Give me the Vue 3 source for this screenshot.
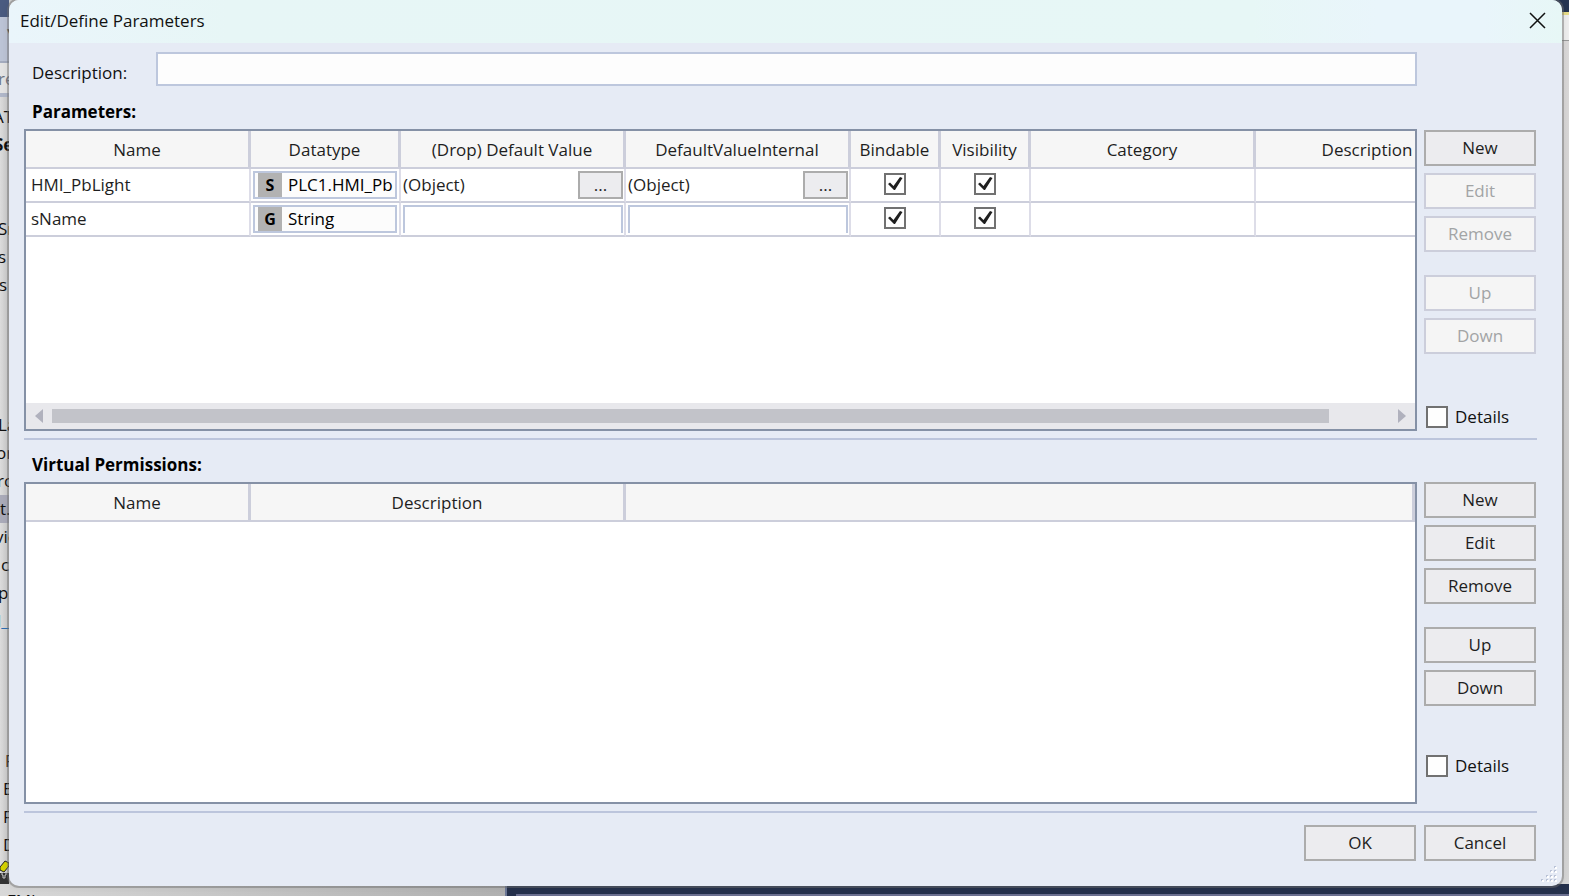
<script setup>
import { ref } from 'vue'

const treeRows = [
  { text: 'AT', indent: -7 }, { text: 'Se', indent: -6, bold: true }, {}, {},
  { text: 'Sr', indent: -2 }, { text: 's', indent: -2 }, { text: 's', indent: -1 }, {}, {}, {}, {},
  { text: 'La', indent: -2 }, { text: 'or', indent: -4 }, { text: 'ro', indent: -3 },
  { text: 't.', indent: 0, selected: true }, { text: 'vie', indent: -5 }, { text: 'c', indent: 1 },
  { text: 'p', indent: -2 }, { text: 'l_', indent: -3, link: true }, {}, {}, {}, {},
  { text: 'P', indent: 5 }, { text: 'E', indent: 3 }, { text: 'F', indent: 3 }, { text: 'D', indent: 3 }
]

const columns = [
  { label: 'Name', cls: 'wide' }, { label: 'Datatype', cls: 'medium' },
  { label: '(Drop) Default Value', cls: 'wide' }, { label: 'DefaultValueInternal', cls: 'wide' },
  { label: 'Bindable', cls: 'narrow' }, { label: 'Visibility', cls: 'narrow' },
  { label: 'Category', cls: 'wide' }, { label: 'Description', cls: 'wide' }
]

const parameters = ref([
  { name: 'HMI_PbLight', kind: 'S', type: 'PLC1.HMI_Pb', object: true, value: '', internal: '', bindable: true, visible: true },
  { name: 'sName', kind: 'G', type: 'String', object: false, value: '', internal: '', bindable: true, visible: true }
])

const description = ref('')
const detailsTop = ref(false)
const detailsBottom = ref(false)
</script>

<template>
  <div class="desktop">
    <div class="backdrop" aria-hidden="true">
      <div class="left-strip">
        <div class="strip-top"></div>
        <div class="strip-tool"><span class="caret">▼</span></div>
        <div class="strip-search">re</div>
        <div class="tree">
          <div
            v-for="(row, i) in treeRows"
            :key="i"
            class="tree-row"
            :class="{ bold: row.bold, selected: row.selected, link: row.link }"
            :style="{ textIndent: (row.indent || 0) + 'px' }"
          >{{ row.text }}</div>
        </div>
        <svg class="pencil" viewBox="0 0 9 24" width="9" height="24">
          <rect y="13" width="9" height="11" fill="#333" />
          <path d="M0 7 L5 1 L9 3 L9 6 L4 12 L0 10 Z" fill="#d6d300" stroke="#222" />
          <path d="M2 12v3h1v3h2v-3h1v-3" fill="none" stroke="#c8c8c8" />
        </svg>
      </div>
      <div class="right-strip"></div>
      <div class="bottom-strip">
        <div class="status">FMI</div>
        <div class="status-dark"><div class="status-line"></div></div>
      </div>
    </div>

    <main class="dialog" role="dialog" aria-labelledby="dialog-title">
      <header class="titlebar">
        <h1 id="dialog-title">Edit/Define Parameters</h1>
        <button class="close" aria-label="Close">
          <svg viewBox="0 0 17 17" width="17" height="17"><path d="M1 1 L16 16 M16 1 L1 16" stroke="#111" stroke-width="1.5" fill="none" /></svg>
        </button>
      </header>

      <div class="content">
        <div class="description-row">
          <label for="description">Description:</label>
          <input id="description" v-model="description" type="text" />
        </div>

        <h2>Parameters:</h2>
        <section class="panel panel-top">
          <div class="grid-box">
            <div class="grid-view">
              <table class="param-table">
                <colgroup><col v-for="c in columns" :key="c.label" :class="c.cls" /></colgroup>
                <thead>
                  <tr><th v-for="c in columns" :key="c.label">{{ c.label }}</th></tr>
                </thead>
                <tbody>
                  <tr v-for="p in parameters" :key="p.name">
                    <td class="name">{{ p.name }}</td>
                    <td>
                      <button class="type-box"><span class="kind">{{ p.kind }}</span><span class="type-name">{{ p.type }}</span></button>
                    </td>
                    <td class="value">
                      <div v-if="p.object" class="object-cell"><span>(Object)</span><button class="dots" aria-label="Edit default value">...</button></div>
                      <input v-else v-model="p.value" class="cell-input" type="text" aria-label="Default value" />
                    </td>
                    <td class="value">
                      <div v-if="p.object" class="object-cell"><span>(Object)</span><button class="dots" aria-label="Edit internal default value">...</button></div>
                      <input v-else v-model="p.internal" class="cell-input" type="text" aria-label="Internal default value" />
                    </td>
                    <td class="tick">
                      <label class="check"><input v-model="p.bindable" type="checkbox" aria-label="Bindable" /><svg viewBox="0 0 22 22"><path d="M4 11 L6 9.500 L9.500 13 L16 4 L18.500 5 L11 17 H10 Z" /></svg></label>
                    </td>
                    <td class="tick">
                      <label class="check"><input v-model="p.visible" type="checkbox" aria-label="Visibility" /><svg viewBox="0 0 22 22"><path d="M4 11 L6 9.500 L9.500 13 L16 4 L18.500 5 L11 17 H10 Z" /></svg></label>
                    </td>
                    <td></td>
                    <td></td>
                  </tr>
                </tbody>
              </table>
            </div>
            <div class="scrollbar">
              <svg viewBox="0 0 8 14" width="8" height="14"><path d="M8 0V14L0 7Z" fill="#b0b1bd" /></svg>
              <div class="track"><div class="thumb"></div></div>
              <svg viewBox="0 0 8 14" width="8" height="14"><path d="M0 0V14L8 7Z" fill="#b0b1bd" /></svg>
            </div>
          </div>
          <aside class="actions">
            <button class="btn">New</button>
            <button class="btn" disabled>Edit</button>
            <button class="btn" disabled>Remove</button>
            <button class="btn apart" disabled>Up</button>
            <button class="btn" disabled>Down</button>
            <label class="details top-details"><span class="check"><input v-model="detailsTop" type="checkbox" /><svg viewBox="0 0 22 22"><path d="M4 11 L6 9.500 L9.500 13 L16 4 L18.500 5 L11 17 H10 Z" /></svg></span>Details</label>
          </aside>
        </section>

        <h2>Virtual Permissions:</h2>
        <section class="panel panel-bottom">
          <div class="grid-box">
            <table class="perm-table">
              <colgroup><col class="wide" /><col class="extra" /><col /></colgroup>
              <thead><tr><th>Name</th><th>Description</th><th></th></tr></thead>
            </table>
          </div>
          <aside class="actions">
            <button class="btn">New</button>
            <button class="btn">Edit</button>
            <button class="btn">Remove</button>
            <button class="btn apart">Up</button>
            <button class="btn">Down</button>
            <label class="details bottom-details"><span class="check"><input v-model="detailsBottom" type="checkbox" /><svg viewBox="0 0 22 22"><path d="M4 11 L6 9.500 L9.500 13 L16 4 L18.500 5 L11 17 H10 Z" /></svg></span>Details</label>
          </aside>
        </section>

        <footer class="footer">
          <button class="btn">OK</button>
          <button class="btn">Cancel</button>
        </footer>
      </div>

      <svg class="grip" viewBox="0 0 18 18" width="18" height="18" aria-hidden="true">
        <g fill="#b9c2d6">
          <rect x="14" y="1" width="2" height="2" /><rect x="10" y="5" width="2" height="2" /><rect x="14" y="5" width="2" height="2" />
          <rect x="6" y="10" width="2" height="2" /><rect x="10" y="10" width="2" height="2" /><rect x="14" y="10" width="2" height="2" />
          <rect x="1" y="14" width="2" height="2" /><rect x="6" y="14" width="2" height="2" /><rect x="10" y="14" width="2" height="2" /><rect x="14" y="14" width="2" height="2" />
        </g>
        <g fill="#fff">
          <rect x="15" y="2" width="2" height="2" /><rect x="11" y="6" width="2" height="2" /><rect x="15" y="6" width="2" height="2" />
          <rect x="7" y="11" width="2" height="2" /><rect x="11" y="11" width="2" height="2" /><rect x="15" y="11" width="2" height="2" />
          <rect x="2" y="15" width="2" height="2" /><rect x="7" y="15" width="2" height="2" /><rect x="11" y="15" width="2" height="2" /><rect x="15" y="15" width="2" height="2" />
        </g>
      </svg>
    </main>
  </div>
</template>

<style>
body { margin: 0; }
</style>

<style scoped>
* { box-sizing: border-box; }
.desktop {
  position: relative;
  display: flex;
  min-height: 100vh;
  padding: 0 7px 10px 9px;
  overflow: hidden;
  font: 17px/24px "Open Sans", "Noto Sans", sans-serif;
  color: #1e1e1e;
}
button, input { font: inherit; color: inherit; margin: 0; padding: 0; border-radius: 0; }

/* Application window behind the dialog */
.backdrop { position: absolute; inset: 0; background: #d0d0d0; }
.left-strip {
  position: absolute; left: 0; top: 0; bottom: 12px; width: 9px;
  display: flex; flex-direction: column; overflow: hidden; white-space: nowrap;
  background: linear-gradient(90deg, #dcdcdc, #c8c8c8);
}
.strip-top { height: 17px; flex: none; background: #4a5b80; }
.strip-tool { height: 46px; flex: none; background: #bcc4d6; border-bottom: 2px solid #a4acbf; }
.caret { display: block; padding: 2px 0 0 5px; font-size: 10px; color: #444; }
.strip-search { height: 34px; flex: none; padding-top: 4px; text-indent: -2px; color: #707684; background: #e4e4e4; border-bottom: 4px solid #b0b7c9; }
.tree { flex: 1; padding-top: 6px; overflow: hidden; }
.tree-row { height: 28px; line-height: 28px; color: #111; }
.tree-row.bold { font-weight: 700; }
.tree-row.selected { background: #aaabb9; }
.tree-row.link { color: #2d6fb4; }
.pencil { position: absolute; left: 0; bottom: 0; }
.right-strip {
  position: absolute; right: 0; top: 0; bottom: 12px; width: 16px;
  background: linear-gradient(#263551 12px, #e8dd88 12px, #e8dd88 15px, #eee 15px, #eee 40px, #999 40px, #999 41px, #dbd9d9 41px, #c9c9c9 70%, #d6d6d6);
}
.bottom-strip { position: absolute; left: 0; right: 0; bottom: 0; height: 12px; display: flex; overflow: hidden; }
.status { width: 507px; padding: 5px 0 0 7px; line-height: 24px; background: linear-gradient(90deg, #d8d8d8, #b0b0b0); border-right: 2px solid #6b7796; color: #111; }
.status-dark { flex: 1; display: flex; align-items: flex-end; padding-left: 9px; background: #25314c; }
.status-line { flex: 1; height: 2px; background: #6b7090; }

/* Dialog frame */
.dialog {
  position: relative;
  flex: 1;
  min-width: 0;
  display: flex;
  flex-direction: column;
  background: #e6ebf5;
  border-radius: 10px;
  box-shadow: 0 0 0 2px rgba(110, 110, 110, 0.45), 0 0 8px rgba(0, 0, 0, 0.12);
}
.titlebar {
  display: flex; align-items: center; justify-content: space-between;
  height: 43px; padding: 0 16px 2px 11px;
  border-radius: 10px 10px 0 0;
  background: linear-gradient(90deg, #eaf5fb 0%, #e7f6f6 14%, #e7f7f6 80%, #e9f5fb 88%, #e9f5fb 95%, #e7f7f6 100%);
}
h1 { margin: 0; font-size: 17px; line-height: 24px; font-weight: 400; color: #111; }
.close { display: flex; border: 0; background: none; }
.content { flex: 1; display: flex; flex-direction: column; padding: 9px 25px 25px 15px; }
.description-row { display: flex; align-items: flex-start; padding: 0 120px 1px 8px; color: #111; }
.description-row label { width: 124px; padding-top: 9px; flex: none; }
.description-row input { flex: 1; min-width: 0; height: 34px; padding: 0 6px; border: 2px solid #bdc7dd; background: #fdfdfd; outline: 0; }
h2 { margin: 0; padding: 13px 0 5px 8px; font-size: 17px; font-weight: 700; line-height: 24px; color: #000; }

/* Grid panels */
.panel { display: flex; gap: 7px; padding-bottom: 7px; border-bottom: 2px solid #bcc5dc; }
.panel-top { flex: 1 1 311px; }
.panel-bottom { flex: 1 1 331px; }
.grid-box { flex: 1; min-width: 0; display: flex; flex-direction: column; border: 2px solid #8591a6; background: #fff; overflow: hidden; }
.grid-view { flex: 1; overflow: hidden; }
table { border-collapse: separate; border-spacing: 0; table-layout: fixed; }
.param-table { width: 1455px; }
.perm-table { width: 100%; }
.wide { width: 225px; }
.medium { width: 150px; }
.narrow { width: 90px; }
.extra { width: 375px; }
th { height: 38px; padding: 2px 0 0; font-weight: 400; white-space: nowrap; background: #f6f6f6; border-right: 3px solid #ccceDb; border-bottom: 2px solid #ccceDb; }
td { height: 34px; padding: 2px; border-right: 2px solid #dddde8; border-bottom: 2px solid #ccceDb; white-space: nowrap; }
td.name { padding: 0 0 0 5px; }
td.value { padding-right: 1px; }
.type-box { display: flex; align-items: center; width: 144px; height: 28px; padding-left: 3px; border: 2px solid #bdc7dd; background: #fcfcfc; color: #000; overflow: hidden; }
.kind { width: 24px; height: 24px; margin-right: 6px; flex: none; text-align: center; font-weight: 700; font-size: 16px; background: #b2b2b2; }
.object-cell { display: flex; align-items: center; justify-content: space-between; height: 28px; }
.dots { width: 45px; height: 28px; border: 2px solid #acacac; background: #ececef; }
.cell-input { display: block; width: 100%; height: 28px; border: 2px solid #bdc7dd; border-bottom: 0; background: #fff; outline: 0; }
.tick { text-align: center; padding-bottom: 4px; }
.check { position: relative; display: block; width: 22px; height: 22px; flex: none; }
.tick .check { margin: 0 auto; }
.check input { display: block; width: 22px; height: 22px; appearance: none; border: 2px solid #717171; background: #fefefe; }
.check svg { position: absolute; inset: 0; fill: #1e1e1e; visibility: hidden; pointer-events: none; }
.check input:checked + svg { visibility: visible; }

.scrollbar { display: flex; align-items: center; gap: 9px; height: 26px; padding: 0 9px; background: #e8e8ec; }
.track { flex: 1; }
.thumb { width: 95.5%; height: 14px; background: #c2c3c9; }

/* Button columns */
.actions { display: flex; flex-direction: column; gap: 7px; width: 113px; flex: none; }
.panel-top .actions { padding-top: 1px; }
.btn { width: 112px; height: 36px; border: 2px solid #acacac; background: #ececef; line-height: 24px; flex: none; }
.btn:disabled { border-color: #ccceDb; background: #f5f5f5; color: #a2a4a5; }
.apart { margin-top: 16px; }
.details { display: flex; align-items: center; gap: 7px; margin-top: auto; padding-left: 2px; color: #111; }
.top-details { margin-bottom: 2px; }
.bottom-details { margin-bottom: 26px; }

.footer { display: flex; justify-content: flex-end; gap: 8px; padding: 12px 1px 0 0; }
.grip { position: absolute; right: 4px; bottom: 3px; }
</style>
